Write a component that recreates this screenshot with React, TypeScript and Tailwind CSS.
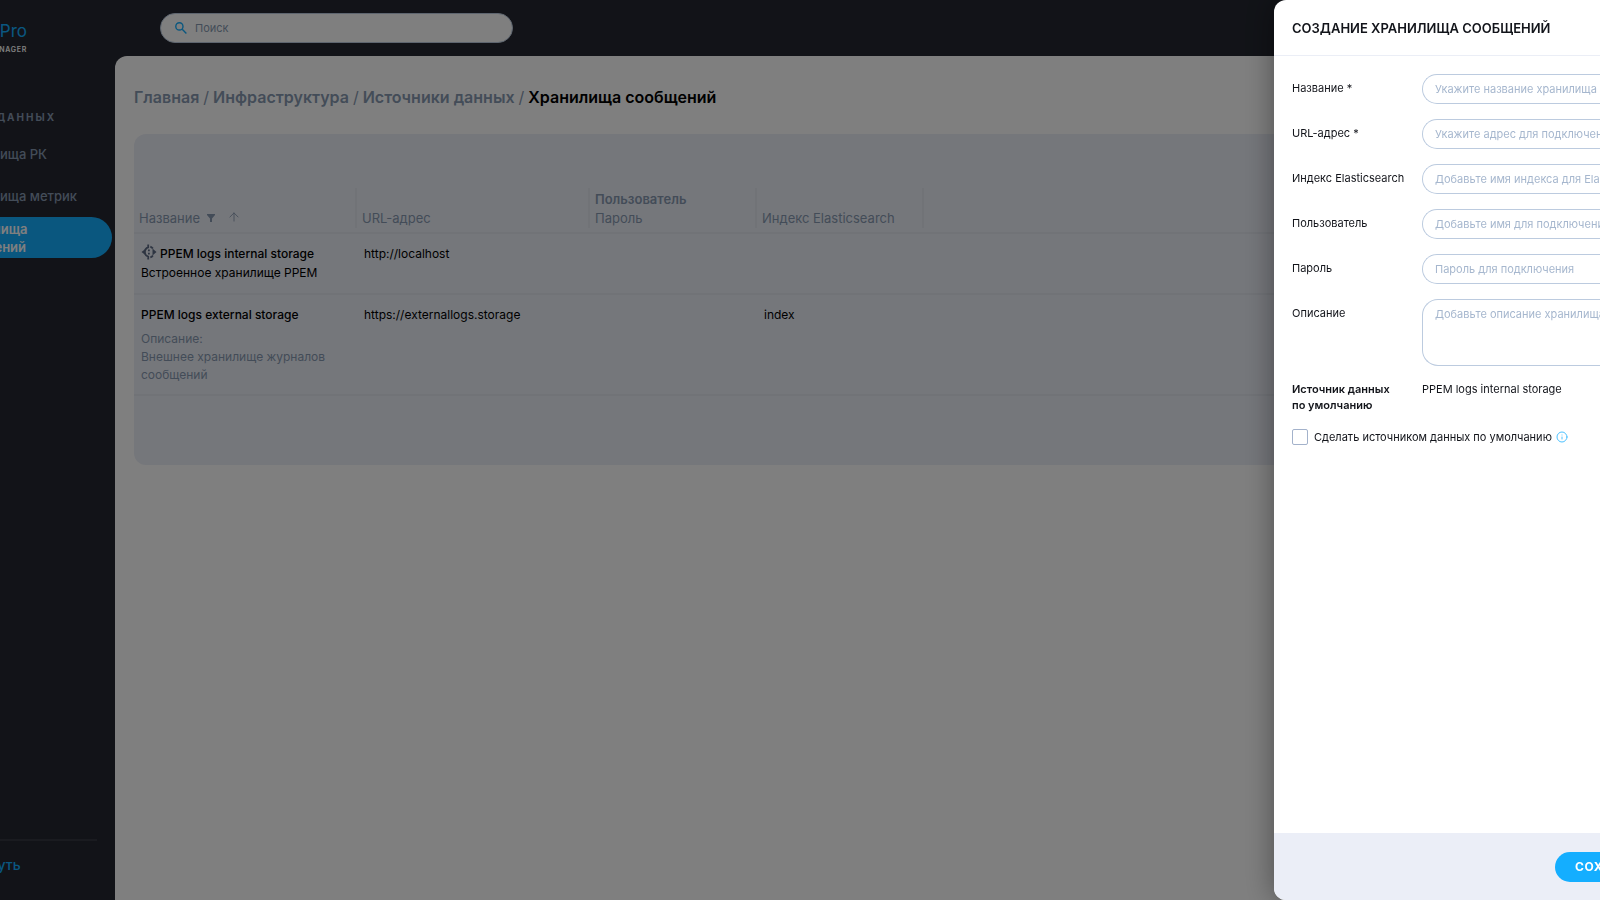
import { ReactNode, useState } from "react";
import { ArrowUp, Info } from "lucide-react";

interface FieldProps {
  id: string;
  label: string;
  children: ReactNode;
}

const menu = [
  { label: "Хранилища РК", active: false },
  { label: "Хранилища метрик", active: false },
  { label: "Хранилища сообщений", active: true },
];

const crumbs = ["Главная", "Инфраструктура", "Источники данных"];

const fields = [
  { id: "name", label: "Название *", placeholder: "Укажите название хранилища" },
  { id: "url", label: "URL-адрес *", placeholder: "Укажите адрес для подключения" },
  { id: "index", label: "Индекс Elasticsearch", placeholder: "Добавьте имя индекса для Elasticsearch" },
  { id: "user", label: "Пользователь", placeholder: "Добавьте имя для подключения" },
  { id: "password", label: "Пароль", placeholder: "Пароль для подключения" },
];

const SearchIcon = () => (
  <svg viewBox="0 0 12 12" className="size-3 shrink-0" fill="none" stroke="#14aeff" strokeWidth="1.4">
    <circle cx="4.4" cy="4.4" r="3.6" />
    <path d="M7.2 7.2 11.4 11.4" />
  </svg>
);

const FilterIcon = () => (
  <svg viewBox="0 0 8 8" className="size-2" fill="#8799b0">
    <path d="M0 0h8v1L5 4.6V8H3V4.6L0 1z" />
  </svg>
);

const StorageIcon = () => (
  <svg viewBox="0 0 16 16" className="size-4 shrink-0" fill="#5d6b84">
    <path d="M0.5 8 4 5.2v5.6zM15.500 8 11.5 4.500v7z" />
    <path d="M7.2 0.500v2.800C5 4 3.900 5.800 3.900 8s1.100 4 3.300 4.700v2.800" fill="none" stroke="#5d6b84" strokeWidth="1.8" />
    <path d="M9.3 2.600c1.200.4 2 1.100 2.600 2M9.300 13.400c1.200-.4 2-1.100 2.600-2" fill="none" stroke="#5d6b84" strokeWidth="1.8" />
    <path d="M7 5.600h1.800v1.600H7zM7 8.800h1.800v1.600H7z" />
  </svg>
);

const Sidebar = () => (
  <aside className="w-[115px] shrink-0 overflow-hidden flex flex-col">
    <div className="-ml-16 flex flex-col grow">
      <div className="flex h-[105px] w-[91px] flex-col items-end pt-[19px]">
        <div className="text-[17px] leading-6 text-[#14aeff] whitespace-nowrap">Postgres Pro</div>
        <div className="text-[7px] leading-[14px] font-semibold tracking-widest whitespace-nowrap text-white">
          ENTERPRISE MANAGER
        </div>
      </div>
      <div className="-ml-7 h-6 text-[10px] leading-6 font-bold tracking-[2px] text-[#8799b0] whitespace-nowrap">
        ИСТОЧНИКИ ДАННЫХ
      </div>
      <nav className="flex flex-col pt-1 pr-[3px]">
        {menu.map((item) => (
          <a
            key={item.label}
            href="#"
            className={
              item.active
                ? "flex items-center h-[41px] rounded-full pl-4 bg-[#14aeff] text-white text-[13px] leading-[18px] font-semibold"
                : "flex items-center h-[42px] pt-px pl-4 text-[#8799b0] text-[13px] font-medium whitespace-nowrap"
            }
          >
            <span className={item.active ? "w-20" : ""}>{item.label}</span>
          </a>
        ))}
      </nav>
      <div className="mt-auto mr-[18px] border-t-2 border-[#343641] h-[61px] pt-[11px]">
        <button type="button" className="pl-[18px] text-[14px] leading-5 font-medium text-[#14aeff]">
          Свернуть
        </button>
      </div>
    </div>
  </aside>
);

const StorageTable = () => (
  <table className="w-full table-fixed border-collapse text-left text-[12px] text-black">
    <colgroup>
      <col className="w-[223px]" />
      <col className="w-[233px]" />
      <col className="w-[167px]" />
      <col className="w-[167px]" />
      <col />
    </colgroup>
    <thead>
      <tr className="h-[45px] border-b-2 border-[#e2e6ef] text-[13px] leading-[19px] text-[#8799b0]">
        <th className="p-0 align-top font-normal">
          <div className="flex h-10 items-end border-r-2 border-[#e2e6ef] px-[5px]">
            Название
            <button type="button" aria-label="Фильтр" className="ml-[7px] pb-1.5">
              <FilterIcon />
            </button>
            <button type="button" aria-label="Сортировка" className="ml-3 pb-1">
              <ArrowUp size={14} strokeWidth={1.5} />
            </button>
          </div>
        </th>
        <th className="p-0 align-top font-normal">
          <div className="flex h-10 items-end border-r-2 border-[#e2e6ef] px-[5px]">URL-адрес</div>
        </th>
        <th className="p-0 align-top font-normal">
          <div className="flex h-10 flex-col justify-end border-r-2 border-[#e2e6ef] px-[5px]">
            <span className="font-semibold">Пользователь</span>
            <span>Пароль</span>
          </div>
        </th>
        <th className="p-0 align-top font-normal">
          <div className="flex h-10 items-end border-r-2 border-[#e2e6ef] px-[5px] whitespace-nowrap">
            Индекс Elasticsearch
          </div>
        </th>
        <th />
      </tr>
    </thead>
    <tbody>
      <tr className="h-[61px] border-b-2 border-[#e2e6ef] align-top leading-[18px]">
        <td className="px-[7px] pt-2.5">
          <div className="flex h-5 items-start gap-[3px] font-medium whitespace-nowrap">
            <StorageIcon />
            <span className="pt-px">PPEM logs internal storage</span>
          </div>
          <div className="whitespace-nowrap">Встроенное хранилище PPEM</div>
        </td>
        <td className="px-[7px] pt-[11px]">http://localhost</td>
        <td />
        <td />
        <td />
      </tr>
      <tr className="h-[101px] border-b-2 border-[#e2e6ef] align-top leading-[18px]">
        <td className="px-[7px] pt-[11px]">
          <div className="font-medium">PPEM logs external storage</div>
          <div className="pt-1.5 text-[#8799b0]">
            Описание:
            <br />
            Внешнее хранилище журналов сообщений
          </div>
        </td>
        <td className="px-[7px] pt-[11px]">https://externallogs.storage</td>
        <td />
        <td className="px-[7px] pt-[11px]">index</td>
        <td />
      </tr>
    </tbody>
  </table>
);

const Field = ({ id, label, children }: FieldProps) => (
  <div className="flex">
    <label htmlFor={id} className="w-[130px] shrink-0 pt-1.5 leading-4 whitespace-nowrap">
      {label}
    </label>
    {children}
  </div>
);

const Drawer = () => {
  const [isDefault, setIsDefault] = useState(false);

  return (
    <div className="fixed inset-y-0 right-0 w-[326px] flex flex-col overflow-hidden rounded-l-xl bg-white text-[#12141a] shadow-[0_0_30px_rgba(0,0,0,0.4)]">
      <h2 className="h-14 shrink-0 border-b border-[#ebeef6] pt-px pl-[18px] text-[13px] leading-[55px] font-semibold whitespace-nowrap">
        СОЗДАНИЕ ХРАНИЛИЩА СООБЩЕНИЙ
      </h2>

      <form className="flex grow flex-col">
        <div className="flex grow flex-col gap-[15px] pt-[18px] pl-[18px] text-[11px]">
          {fields.map((field) => (
            <Field key={field.id} id={field.id} label={field.label}>
              <input
                id={field.id}
                type={field.id === "password" ? "password" : "text"}
                placeholder={field.placeholder}
                className="h-[30px] min-w-0 grow rounded-l-full border border-r-0 border-[#bccbdf] pl-3 placeholder:text-[#a6b7ce] focus:outline-none"
              />
            </Field>
          ))}
          <Field id="description" label="Описание">
            <textarea
              id="description"
              placeholder="Добавьте описание хранилища"
              className="h-[67px] min-w-0 grow resize-none rounded-l-2xl border border-r-0 border-[#bccbdf] pt-1.5 pl-3 leading-4 whitespace-nowrap placeholder:text-[#a6b7ce] focus:outline-none"
            />
          </Field>

          <div className="flex leading-4">
            <div className="w-[130px] shrink-0 font-semibold">
              Источник данных
              <br />
              по умолчанию
            </div>
            <div>PPEM logs internal storage</div>
          </div>

          <div className="flex items-center pt-px">
            <input
              id="default"
              type="checkbox"
              checked={isDefault}
              onChange={() => setIsDefault(!isDefault)}
              className="size-4 appearance-none rounded-xs border border-[#a3b2cb] checked:bg-[#14aeff]"
            />
            <label htmlFor="default" className="pl-1.5 whitespace-nowrap">
              Сделать источником данных по умолчанию
            </label>
            <Info size={12} strokeWidth={2} className="ml-1 shrink-0 text-[#4cc2ff]" />
          </div>
        </div>

        <div className="flex h-[67px] shrink-0 items-center justify-end bg-[#ebeef7]">
          <button
            type="submit"
            className="h-[30px] w-[45px] overflow-hidden rounded-l-full bg-[#14aeff] pl-5 text-left text-[12px] font-bold tracking-wider text-white"
          >
            СОХ
          </button>
        </div>
      </form>
    </div>
  );
};

const App = () => {
  return (
    <div className="flex h-screen overflow-hidden bg-[#242730] font-['Inter',sans-serif]">
      <Sidebar />

      <div className="flex min-w-0 grow flex-col">
        <header className="flex h-14 shrink-0 items-center pl-[45px]">
          <label className="flex h-[30px] w-[353px] items-center gap-2 rounded-full border border-[#bccbdf] bg-white pl-3.5">
            <SearchIcon />
            <input
              type="search"
              placeholder="Поиск"
              className="grow text-[11px] placeholder:text-[#8799b0] focus:outline-none"
            />
          </label>
        </header>

        <main className="grow rounded-tl-xl bg-white pt-7 pl-[19px]">
          <nav className="flex gap-1 text-[16px] leading-[26px] font-semibold whitespace-nowrap text-[#8799b0]">
            {crumbs.map((crumb) => (
              <span key={crumb} className="flex gap-1">
                <a href="#">{crumb}</a>
                <span className="font-normal">/</span>
              </span>
            ))}
            <span className="text-black">Хранилища сообщений</span>
          </nav>

          <section className="mt-6 rounded-l-xl bg-[#ebeef7] pt-[54px] pb-[69px]">
            <StorageTable />
          </section>
        </main>
      </div>

      <div className="fixed inset-0 bg-black/50" />
      <Drawer />
    </div>
  );
};

export default App;
